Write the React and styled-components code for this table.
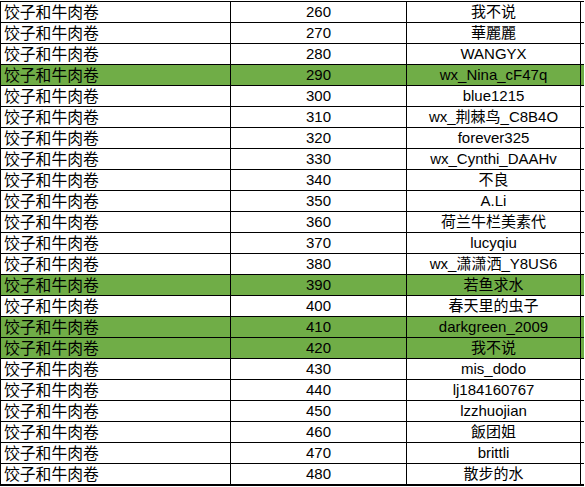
import styled, { createGlobalStyle } from "styled-components";

const GlobalStyle = createGlobalStyle`
  body {
    margin: 0;
    background: #ffffff;
    font-family: "Liberation Sans", "Noto Sans CJK SC", sans-serif;
  }
`;

const rows = [
  [260, "我不说"],
  [270, "華麗麗"],
  [280, "WANGYX"],
  [290, "wx_Nina_cF47q", true],
  [300, "blue1215"],
  [310, "wx_荆棘鸟_C8B4O"],
  [320, "forever325"],
  [330, "wx_Cynthi_DAAHv"],
  [340, "不良"],
  [350, "A.Li"],
  [360, "荷兰牛栏美素代"],
  [370, "lucyqiu"],
  [380, "wx_潇潇洒_Y8US6"],
  [390, "若鱼求水", true],
  [400, "春天里的虫子"],
  [410, "darkgreen_2009", true],
  [420, "我不说", true],
  [430, "mis_dodo"],
  [440, "lj184160767"],
  [450, "lzzhuojian"],
  [460, "飯团姐"],
  [470, "brittli"],
  [480, "散步的水"],
];

const App = () => {
  return (
    <>
      <GlobalStyle />
      <Sheet>
        {rows.map(([num, name, hl], i) => (
          <Row key={num} $hl={hl} $last={i === rows.length - 1}>
            <NameCell>饺子和牛肉卷</NameCell>
            <CenterCell>{num}</CenterCell>
            <CenterCell>{name}</CenterCell>
          </Row>
        ))}
      </Sheet>
    </>
  );
};

export default App;

const Sheet = styled.div`
  margin-top: 1px;
  width: 584px;
  border-top: 1px solid #000;
  border-left: 1px solid #000;
  box-sizing: border-box;
`;

const Row = styled.div`
  display: grid;
  grid-template-columns: 230px 176px 174px;
  height: 20px;
  border-bottom: ${(p) => (p.$last ? "2px" : "1px")} solid #000;
  background: ${(p) => (p.$hl ? "#70ad47" : "#ffffff")};
  color: #000;
  font-size: 15px;
`;

const Cell = styled.div`
  border-right: 1px solid #000;
  display: flex;
  align-items: center;
  white-space: nowrap;
  line-height: 18px;
`;

const NameCell = styled(Cell)`
  padding-left: 3px;
  font-size: 15.8px;
  font-family: "Noto Sans CJK SC", sans-serif;
`;

const CenterCell = styled(Cell)`
  justify-content: center;
`;
